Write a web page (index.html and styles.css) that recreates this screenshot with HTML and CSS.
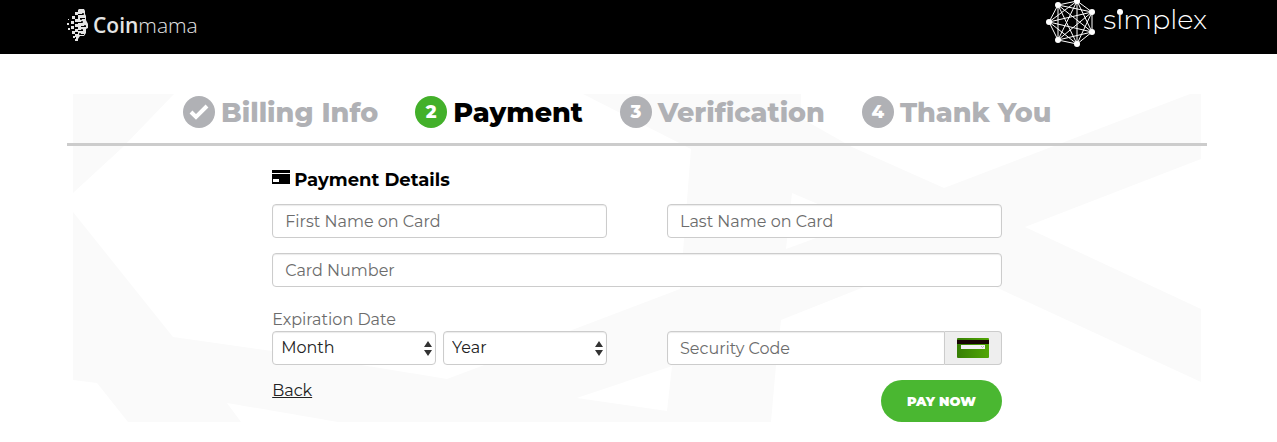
FILE: index.html
```html
<!DOCTYPE html>
<html lang="en">
<head>
<meta charset="utf-8">
<meta name="viewport" content="width=device-width, initial-scale=1">
<title>Payment</title>
<link rel="stylesheet" href="styles.css">
</head>
<body>
<header class="site-header">
  <a class="coinmama" href="#">
    <svg class="coinmama-mark" viewBox="0 0 22 34" aria-hidden="true">
      <path d="M12 1h5l1 2v3l1 2v4l2 4v4l-2 1v4l-2 3h-4l-2 3-1 2-1-1V28h2V2z"/>
      <path d="M8 4h3v3H8zM5 8h3v3H5zM1 11h1v1H1zM8 11h3v3H8zM4 13h3v3H4zM0 15h2v2H0zM8 16h3v3H8zM4 18h3v3H4zM1 20h2v2H1zM8 21h3v3H8zM5 23h3v3H5zM8 26h3v3H8zM6 28h2v2H6zM8 31h3v2H8z"/>
      <path class="cut" d="M11 6h5v1h-5zM13 10h5v1h-5zM11 14h4v1h-4zM14 18h5v1h-5zM11 22h5v1h-5zM13 26h4v1h-4z"/>
      <circle class="cut" cx="16" cy="6" r="1"/><circle class="cut" cx="14" cy="11" r="1"/><circle class="cut" cx="15" cy="14" r="1"/><circle class="cut" cx="18" cy="18" r="1"/><circle class="cut" cx="15" cy="22" r="1"/><circle class="cut" cx="13" cy="26" r="1"/>
    </svg>
    <span class="coinmama-name"><b>Coin</b>mama</span>
  </a>
  <a class="simplex" href="#">
    <svg class="simplex-mark" viewBox="0 0 50 48" aria-hidden="true">
      <path d="M3 22 12 5 31 1 46 12V32L31 44 12 40ZM3 22 31 1 46 32 12 40 12 5 46 12 31 44ZM3 22 46 12 12 40 31 1V44L12 5 46 32Z"/>
      <g><circle cx="3" cy="22" r="3"/><circle cx="12" cy="5" r="3"/><circle cx="31" cy="1" r="3"/><circle cx="46" cy="12" r="3"/><circle cx="46" cy="32" r="3"/><circle cx="31" cy="44" r="3"/><circle cx="12" cy="40" r="3"/></g>
    </svg>
    <span class="simplex-name">s<span class="dotted">i</span>mplex</span>
  </a>
</header>

<main class="checkout">
  <svg class="backdrop" viewBox="73 94 1128 328" preserveAspectRatio="none" aria-hidden="true">
    <path fill-rule="evenodd" d="M73 94H174L123 147 73 193ZM73 212 173 337 272 351 380 368 447 379 487 364 572 330 680 289 683 252 691 149 583 94H801V118L852 147 944 188 1190 94H1201V159L1025 227 1201 309V382L1002 290 935 258 864 287 781 320 776 365 771 422H338L227 403 241 422H128L97 383 73 380ZM577 398 672 366 667 411ZM792 193 860 222 786 249Z"/>
  </svg>

  <ol class="steps">
    <li class="step"><span class="dot"><svg viewBox="0 0 32 32" aria-hidden="true"><path d="M8 16 13 21 24 10"/></svg></span>Billing Info</li>
    <li class="step current" aria-current="step"><span class="dot">2</span>Payment</li>
    <li class="step"><span class="dot">3</span>Verification</li>
    <li class="step"><span class="dot">4</span>Thank You</li>
  </ol>

  <form class="payment">
    <h2 class="title">
      <svg class="card-icon" viewBox="0 0 18 14" aria-hidden="true"><path fill-rule="evenodd" d="M0 0H18V3H0ZM0 4H18V14H0ZM1 9V12H7V9Z"/></svg>
      Payment Details
    </h2>
    <div class="row names">
      <input class="field" type="text" placeholder="First Name on Card" aria-label="First Name on Card">
      <input class="field" type="text" placeholder="Last Name on Card" aria-label="Last Name on Card">
    </div>
    <input class="field" type="text" placeholder="Card Number" aria-label="Card Number">
    <div class="row details">
      <div class="expiry">
        <label class="label" for="month">Expiration Date</label>
        <div class="selects">
          <div class="select">
            <select id="month" class="field"><option>Month</option></select>
            <svg class="arrows" viewBox="0 0 8 15" aria-hidden="true"><path d="M4 0 8 6H0ZM0 9H8L4 15Z"/></svg>
          </div>
          <div class="select">
            <select class="field" aria-label="Year"><option>Year</option></select>
            <svg class="arrows" viewBox="0 0 8 15" aria-hidden="true"><path d="M4 0 8 6H0ZM0 9H8L4 15Z"/></svg>
          </div>
        </div>
      </div>
      <div class="security">
        <input class="field" type="text" placeholder="Security Code" aria-label="Security Code">
        <span class="addon">
          <svg viewBox="0 0 32 20" aria-hidden="true">
            <defs><linearGradient id="card-green"><stop offset="0" stop-color="#377f05"/><stop offset="1" stop-color="#51a605"/></linearGradient></defs>
            <rect width="32" height="20" rx="1" fill="url(#card-green)"/>
            <path fill="#180505" d="M0 2h32v4H0z"/>
            <path fill="#f4f4f4" d="M4 7h24v4H4z"/>
            <path fill="#bbb" d="M24 8h1v1h-1zM26 8h1v1h-1zM25 9h1v1h-1z"/>
          </svg>
        </span>
      </div>
    </div>
    <div class="actions">
      <a class="back" href="#">Back</a>
      <button class="pay" type="submit">PAY NOW</button>
    </div>
  </form>
</main>
</body>
</html>
```

FILE: styles.css
```css
* {
  box-sizing: border-box;
}

body {
  margin: 0;
  background: #fff;
  color: #222;
  font-family: Montserrat, Inter, sans-serif;
  font-size: 16px;
  line-height: 20px;
}

.site-header {
  display: flex;
  justify-content: space-between;
  align-items: flex-start;
  height: 54px;
  padding: 0 70px 0 67px;
  background: #000;
  overflow: hidden;
}

.coinmama,
.simplex {
  display: flex;
  color: #e4e4e4;
  text-decoration: none;
}

.coinmama {
  gap: 4px;
  padding-top: 8px;
}

.coinmama-mark {
  width: 22px;
  height: 34px;
  fill: #e4e4e4;
}

.coinmama-mark .cut {
  fill: #000;
}

.coinmama-name {
  font: 300 21px/34px "Open Sans", sans-serif;
}

.coinmama-name b {
  font-weight: 600;
}

.simplex {
  gap: 7px;
  color: #fff;
}

.simplex-mark {
  width: 50px;
  height: 48px;
  fill: none;
  stroke: #fff;
}

.simplex-mark g {
  fill: #fff;
  stroke: none;
}

.simplex-name {
  font-size: 27px;
  font-weight: 300;
  line-height: 40px;
}

.dotted {
  position: relative;
}

.dotted::before {
  content: "";
  position: absolute;
  top: 6px;
  left: 50%;
  width: 6px;
  height: 6px;
  margin-left: -3px;
  border-radius: 50%;
  background: #fff;
}

.checkout {
  position: relative;
  margin: 40px 70px 0 67px;
}

.backdrop {
  position: absolute;
  z-index: -1;
  top: 0;
  left: 6px;
  width: calc(100% - 12px);
  height: 100%;
  fill: #fafafa;
}

.steps {
  display: flex;
  flex-wrap: wrap;
  gap: 0 37px;
  margin: 0;
  padding: 2px 0 13px 116px;
  border-bottom: 3px solid #ccc;
  list-style: none;
}

.step {
  display: flex;
  gap: 6px;
  color: #b0b1b5;
  font-size: 27px;
  font-weight: 800;
  line-height: 34px;
}

.step.current {
  color: #000;
}

.dot {
  width: 32px;
  height: 32px;
  border-radius: 50%;
  background: #b0b1b5;
  color: #fff;
  font-size: 18px;
  line-height: 32px;
  text-align: center;
}

.dot svg {
  display: block;
  fill: none;
  stroke: #fff;
  stroke-width: 4px;
}

.current .dot {
  background: #43b02a;
}

.payment {
  padding: 24px 18% 0;
}

.title {
  display: flex;
  gap: 4px;
  margin: 0 0 14px;
  color: #000;
  font-size: 18px;
  font-weight: 700;
  line-height: 20px;
}

.card-icon {
  width: 18px;
  height: 14px;
}

.row {
  display: grid;
  grid-template-columns: 1fr 1fr;
  gap: 60px;
}

.names {
  margin-bottom: 15px;
}

.details {
  align-items: end;
  margin: 22px 0 15px;
}

.field {
  display: block;
  width: 100%;
  height: 34px;
  padding: 0 12px;
  border: 1px solid #ccc;
  border-radius: 4px;
  background: #fff;
  box-shadow: inset 0 1px 1px rgba(0, 0, 0, 0.08);
  color: #222;
  font: inherit;
}

.field::placeholder {
  color: #6c6c6c;
  opacity: 1;
}

.label {
  display: block;
  color: #6c6c6c;
  line-height: 22px;
}

.selects {
  display: grid;
  grid-template-columns: 1fr 1fr;
  gap: 7px;
}

.select {
  position: relative;
}

.select .field {
  padding: 0 20px 0 8px;
  appearance: none;
}

.arrows {
  position: absolute;
  top: 10px;
  right: 4px;
  width: 8px;
  height: 15px;
  fill: #333;
  pointer-events: none;
}

.security {
  display: flex;
}

.security .field {
  flex: 1;
  min-width: 0;
  border-radius: 4px 0 0 4px;
}

.addon {
  padding: 6px 12px;
  border: 1px solid #ccc;
  border-left: 0;
  border-radius: 0 4px 4px 0;
  background: #eee;
}

.addon svg {
  display: block;
  width: 32px;
  height: 20px;
}

.actions {
  display: flex;
  justify-content: space-between;
  align-items: flex-start;
}

.back {
  color: #222;
  line-height: 22px;
}

.pay {
  padding: 11px 26px;
  border: 0;
  border-radius: 21px;
  background: #4ab731;
  color: #fff;
  font: inherit;
  font-size: 13px;
  font-weight: 900;
  line-height: 20px;
}
```
